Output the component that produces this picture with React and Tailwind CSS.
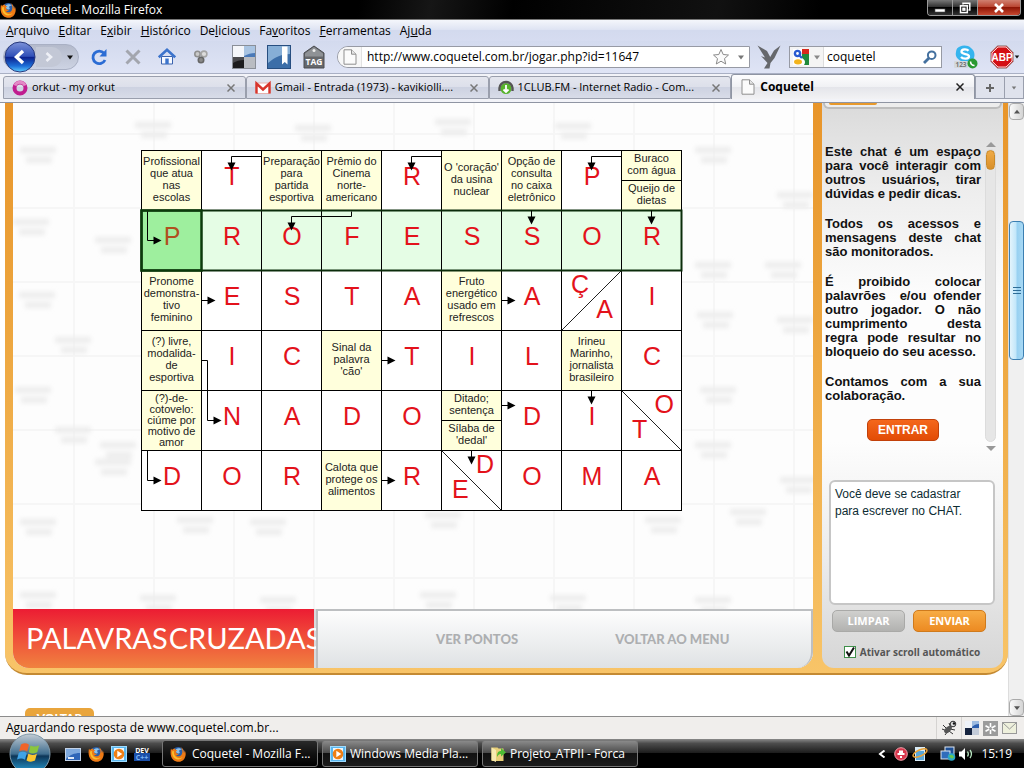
import React from "react";

const UI = "font-['Open_Sans','Noto_Sans',sans-serif]";
const ARIAL = "font-['Liberation_Sans',Arial,sans-serif]";

/* ---------- icons ---------- */

function FirefoxIcon({ className = "size-4" }) {
  return (
    <svg viewBox="0 0 16 16" className={className} aria-hidden="true">
      <circle cx="8.2" cy="7.6" r="6.6" fill="#2b5fa8" />
      <path d="M6 3.2c2-1.6 5-1 6 .8-1.500-.4-2.500.2-3 1.200 1 .6 1 1.600 0 2.200-1.600.2-3-.8-3-2z" fill="#8cc3ec" />
      <path d="M1 2.600C.2 6.500.300 11 3.200 13.700c3.400 3 8.600 2.600 11-.8 1.900-2.700 2-6.400.3-9 .2 1.500 0 2.300-.5 3C13.800 4 12.500 2 10.700 1c1.800 2.200 2.300 5.500.8 7.700-1.500 2.200-4.600 2-5.600.4 1.300.3 2.300-.2 2.900-1.100-1.500-.2-2.800-1-2.900-2.100.1-.9.700-1.400 1.400-1.500C5.800 4 4.800 3.400 4.500 2.600 3.500 2.800 2.600 3.300 2 4c-.5-.4-.8-.9-1-1.400z" fill="#ee7a15" />
      <path d="M2 5.500c0 3 .8 5.500 3 7 2.500 1.600 5.800 1 7.600-1.200-2.400 1.400-5.700 1-7.300-1C4 8.800 3.600 7 4 5z" fill="#fbc02c" />
    </svg>
  );
}

function PageIcon({ className = "w-3.5 h-4" }) {
  return (
    <svg viewBox="0 0 14 16" className={className} aria-hidden="true">
      <path d="M1 .8h7.500L13 5.200v10H1z" fill="#fbfbfb" stroke="#8f8f8f" />
      <path d="M8.500.8v4.400H13" fill="#e6e6e6" stroke="#8f8f8f" />
    </svg>
  );
}

function MediaIcon() {
  return (
    <svg viewBox="0 0 16 16" className="size-4 shrink-0" aria-hidden="true">
      <rect x=".5" y=".5" width="15" height="15" fill="#5bb7ee" stroke="#9fdcff" />
      <rect x="3" y="2" width="10" height="12" fill="#eef6fb" />
      <circle cx="8" cy="8" r="5.300" fill="#ef7f15" />
      <path d="M6.300 4.800 11.300 8l-5 3.200z" fill="#fff" />
    </svg>
  );
}

function DeliciousIcon({ className }) {
  return (
    <svg viewBox="0 0 24 24" className={className} aria-hidden="true">
      <rect width="24" height="24" fill="#8a8f98" />
      <rect x="1" y="1" width="11" height="11" fill="#f4f6fa" />
      <rect x="12" y="1" width="11" height="11" fill="#4a79b8" />
      <path d="M12 1h11v7c-4 0-7 1-11 3z" fill="#a9c4e2" />
      <rect x="1" y="12" width="11" height="11" fill="#1c1c1e" />
      <rect x="12" y="12" width="11" height="11" fill="#b9bcc2" />
      <path d="M1 12h11v3c-4 0-8 1-11 3z" fill="#4a4a4e" />
    </svg>
  );
}

/* ---------- browser chrome ---------- */

function TitleBar() {
  return (
    <header className="flex h-5 shrink-0 items-center bg-black bg-[linear-gradient(100deg,#000_35%,#161616_42%,#000_50%,#111_70%,#000_80%)] border-b border-[#777]">
      <FirefoxIcon className="size-4 shrink-0" />
      <h1 className="flex-1 pl-[5px] text-[12px] leading-4 text-white">Coquetel - Mozilla Firefox</h1>
      <div className="mr-[3px] flex h-4 self-start overflow-hidden rounded-b-[4px] border border-t-0 border-[#9a9a9a]">
        <button aria-label="Minimizar" className="flex w-[25px] items-center justify-center border-r border-[#9a9a9a] bg-[linear-gradient(#777,#2a2a2a_50%,#000_50%,#333)]">
          <svg viewBox="0 0 12 12" className="size-3"><rect x="1" y="7" width="10" height="3" fill="#fff" stroke="#555" strokeWidth=".6" /></svg>
        </button>
        <button aria-label="Restaurar" className="flex w-[25px] items-center justify-center border-r border-[#9a9a9a] bg-[linear-gradient(#777,#2a2a2a_50%,#000_50%,#333)]">
          <svg viewBox="0 0 12 12" className="size-3" fill="none" stroke="#fff" strokeWidth="1.500"><path d="M4 2.500V1.200h6.800V8H9.500" /><rect x="1.500" y="3.800" width="6.800" height="6.800" /><rect x="4" y="6.300" width="1.800" height="1.800" /></svg>
        </button>
        <button aria-label="Fechar" className="flex w-[42px] items-center justify-center bg-[linear-gradient(#d08070,#b8402c_50%,#8e1606_50%,#c84830)]">
          <svg viewBox="0 0 12 12" className="size-3" stroke="#fff" strokeWidth="2.600"><path d="M2 2l8 8M10 2l-8 8" /></svg>
        </button>
      </div>
    </header>
  );
}

const MENUS = [
  ["", "A", "rquivo"],
  ["", "E", "ditar"],
  ["E", "x", "ibir"],
  ["", "H", "istórico"],
  ["De", "l", "icious"],
  ["Fa", "v", "oritos"],
  ["", "F", "erramentas"],
  ["Aj", "u", "da"],
];

function MenuBar() {
  return (
    <nav className="flex h-[21px] shrink-0 items-center gap-[9px] bg-[linear-gradient(#f4f6fb,#dfe4f3_45%,#d3daee_50%,#d6dcf0)] pl-1.5 text-[12px] text-black">
      {MENUS.map(([a, u, b]) => (
        <button key={a + u + b}>{a}<u>{u}</u>{b}</button>
      ))}
    </nav>
  );
}

function BackForward() {
  return (
    <div className="flex h-[26px] w-[76px] items-center rounded-full border border-[#a9b0c4] bg-[linear-gradient(#b4bacb,#cdd3e3)]">
      <button aria-label="Voltar" className="-my-1 shrink-0">
        <svg viewBox="0 0 32 32" className="size-8">
          <defs>
            <linearGradient id="back" x2="0" y2="1">
              <stop offset="0" stopColor="#7d92d8" /><stop offset=".48" stopColor="#2f4fb8" />
              <stop offset=".5" stopColor="#0c1f8c" /><stop offset=".8" stopColor="#1d6fd8" /><stop offset="1" stopColor="#62d0ff" />
            </linearGradient>
          </defs>
          <circle cx="16" cy="16" r="15" fill="url(#back)" stroke="#27387c" />
          <path d="M19 10l-6.500 6 6.500 6" fill="none" stroke="#fff" strokeWidth="3.400" />
        </svg>
      </button>
      <button aria-label="Avançar" className="flex h-5 w-[26px] items-center justify-center rounded-r-full bg-[#c3c8d6]">
        <svg viewBox="0 0 12 12" className="size-3" fill="none" stroke="#eef0f6" strokeWidth="2.600"><path d="M3.500 2l4.500 4-4.500 4" /></svg>
      </button>
      <svg viewBox="0 0 8 5" className="ml-1 h-[5px] w-2"><path d="M1 .5h6L4 4.500z" fill="#111" /></svg>
    </div>
  );
}

function Toolbar() {
  return (
    <div className="flex h-[33px] shrink-0 items-center border-b border-[#a9b0c4] bg-[linear-gradient(#d3daee,#dfe4f5)] pl-[3px] text-[12px]">
      <BackForward />
      <button aria-label="Recarregar" className="ml-[11px]">
        <svg viewBox="0 0 18 18" className="size-[18px]"><path d="M14 5.200A6.300 6.300 0 1 0 15 12" fill="none" stroke="#2b6cd4" strokeWidth="2.800" /><path d="M16.500 1v7.500H9.500z" fill="#2b6cd4" /></svg>
      </button>
      <button aria-label="Parar" className="ml-[17px]">
        <svg viewBox="0 0 16 16" className="size-4" stroke="#a3a6ae" strokeWidth="3"><path d="M1.500 1.500l13 13M14.500 1.500l-13 13" /></svg>
      </button>
      <button aria-label="Página inicial" className="ml-[17px]">
        <svg viewBox="0 0 18 18" className="size-[18px]"><path d="M3.500 8.500h11V16h-11z" fill="#f6f9ff" stroke="#3b63ae" /><path d="M.8 9.300 9 1.800l8.200 7.500" fill="none" stroke="#3b73cc" strokeWidth="2.600" /><path d="M7.300 10.500h3.400V16H7.300z" fill="#3b73cc" /></svg>
      </button>
      <button aria-label="Extensões" className="ml-[17px]">
        <svg viewBox="0 0 16 16" className="size-4"><circle cx="4.500" cy="5" r="2.700" fill="#c9c9c9" stroke="#8f8f8f" strokeWidth="1.600" /><circle cx="11" cy="5" r="2.900" fill="#dcdcdc" stroke="#a5a5a5" strokeWidth="1.600" /><circle cx="8" cy="11" r="2.700" fill="#8a8a8a" stroke="#666" strokeWidth="1.600" /></svg>
      </button>
      <button aria-label="Delicious" className="ml-[23px]"><DeliciousIcon className="size-6" /></button>
      <button aria-label="Favoritos" className="ml-[11px]">
        <svg viewBox="0 0 24 24" className="size-6"><rect x=".5" y=".5" width="23" height="23" fill="#3c6ea8" stroke="#274e80" /><path d="M1 1h22v8C15 9 8 12 1 18z" fill="#86aed6" /><path d="M15 1.500h5.500v18l-2.700-2.500-2.800 2.500z" fill="#fff" /></svg>
      </button>
      <button aria-label="Etiquetar" className="ml-3">
        <svg viewBox="0 0 22 24" className="h-6 w-[22px]"><path d="M11 1 21 8v15H1V8z" fill="#66686c" stroke="#4a4c50" /><path d="M11 2l9 6.500v3H2v-3z" fill="#8f9296" /><circle cx="11" cy="5.500" r="1.500" fill="#eee" /><text x="11" y="20" textAnchor="middle" fontSize="8.500" fontWeight="700" fill="#fff" fontFamily="Open Sans">TAG</text></svg>
      </button>
      <div className="ml-3 flex h-[22px] min-w-0 flex-1 items-center rounded-l-full border border-[#979aa4] bg-white">
        <span className="flex h-full w-6 items-center justify-center rounded-l-full border-r border-[#e2e2e2] bg-[#f7f7f7]"><PageIcon /></span>
        <input aria-label="Endereço" defaultValue="http://www.coquetel.com.br/jogar.php?id=11647" className="min-w-0 flex-1 bg-transparent pl-[5px] outline-none" />
        <svg viewBox="0 0 18 18" className="size-[18px] shrink-0"><path d="M9 1.500l2.200 5 5.300.5-4 3.600 1.200 5.400L9 13.200 4.300 16l1.200-5.400L1.500 7l5.300-.5z" fill="#fbfbfb" stroke="#8a8a8a" /></svg>
        <svg viewBox="0 0 8 5" className="ml-[7px] mr-1 h-[5px] w-2 shrink-0"><path d="M1 .5h6L4 4.500z" fill="#777" /></svg>
      </div>
      <button aria-label="Leitor" className="ml-[7px]">
        <svg viewBox="0 0 24 24" className="size-6" fill="#66686c"><path d="M.5.5 10 6l3.200 6L17 5.500 23.500.5 17.500 13 13.500 18 12.500 23.500H7L10.500 18 4 11l4 1.500z" /></svg>
      </button>
      <div className="ml-2 flex h-[22px] w-[153px] items-center border border-[#979aa4] bg-white">
        <button aria-label="Mecanismo de busca" className="flex h-full w-[34px] items-center gap-1 border-r border-[#ddd] bg-[#f4f4f4] pl-[3px]">
          <svg viewBox="0 0 16 16" className="size-4"><rect width="16" height="16" fill="#fff" /><rect x="9" width="7" height="6" fill="#d8281c" /><path d="M9 5h7v11h-5c2-3 1-5-2-7z" fill="#1f8a3c" /><circle cx="4.500" cy="4.500" r="2.600" fill="none" stroke="#2a5bd0" strokeWidth="2.400" /><path d="M6.500 6.500 9 9" stroke="#2a5bd0" strokeWidth="2.400" /><ellipse cx="5" cy="12.800" rx="4" ry="2.600" fill="#f3b41c" /></svg>
          <svg viewBox="0 0 8 5" className="h-[5px] w-2"><path d="M1 .5h6L4 4.500z" fill="#888" /></svg>
        </button>
        <input aria-label="Busca" defaultValue="coquetel" className="min-w-0 flex-1 bg-transparent pl-[3px] outline-none" />
        <button aria-label="Buscar" className="mr-1">
          <svg viewBox="0 0 14 14" className="size-3.5" fill="none" stroke="#44719f" ><circle cx="8.700" cy="5.200" r="3.800" strokeWidth="2" /><path d="M6 8 1 13" strokeWidth="2.800" /></svg>
        </button>
      </div>
      <button aria-label="Skype" className="ml-3">
        <svg viewBox="0 0 24 24" className="size-6"><path d="M6 1.500C9 0 14 0 17 3c4 3 4.500 8 2 12-3 3-9 3-12 1C3 14 1 11 2 7c0-3 2-5 4-5.500z" fill="#35b4ee" /><path d="M14.500 5.800c-1.500-2-7-2-7 1 0 3 7.500 1.500 7.500 4.500s-6 3-8 .7" fill="none" stroke="#fff" strokeWidth="2.300" /><rect x="0" y="16" width="14" height="7" rx="1" fill="#d4d8dc" /><text x="7" y="22" textAnchor="middle" fontSize="6.500" fontWeight="700" fill="#777" fontFamily="Open Sans">123</text><circle cx="18.500" cy="18.500" r="5" fill="#2a9a32" /><path d="M16.500 16.500c.2 2.500 1.700 4 4 4" fill="none" stroke="#fff" strokeWidth="1.600" /></svg>
      </button>
      <button aria-label="Adblock Plus" className="ml-3 mr-1 flex items-center">
        <svg viewBox="0 0 24 24" className="size-6"><path d="M7.500.8h9L23.200 7.500v9l-6.700 6.700h-9L.8 16.500v-9z" fill="#d40f14" stroke="#9a9a9a" /><path d="M8 2h8l6 6v8l-6 6H8l-6-6V8z" fill="none" stroke="#fff" strokeWidth=".8" /><text x="12" y="16" textAnchor="middle" fontSize="10" fontWeight="700" fill="#fff" fontFamily="Liberation Sans Narrow, Liberation Sans">ABP</text></svg>
        <svg viewBox="0 0 8 5" className="h-1 w-1.5"><path d="M1 .5h6L4 4.500z" fill="#111" /></svg>
      </button>
    </div>
  );
}

function CloseX({ active }) {
  return (
    <svg viewBox="0 0 8 8" className={active ? "size-2 stroke-[#222]" : "size-2 stroke-[#777]"} strokeWidth="1.500"><path d="M.5.5l7 7M7.500.5l-7 7" /></svg>
  );
}

const TABS = [
  {
    title: "orkut - my orkut",
    icon: <svg viewBox="0 0 16 16" className="size-4 shrink-0"><circle cx="8" cy="8" r="5.500" fill="none" stroke="#c01d8f" strokeWidth="4" /><path d="M3 5.500a5.500 5.500 0 0 1 10 0" fill="none" stroke="#e389c6" strokeWidth="3" /></svg>,
  },
  {
    title: "Gmail - Entrada (1973) - kavikiolli....",
    icon: <svg viewBox="0 0 16 16" className="size-4 shrink-0"><path d="M1 3h14v10.500H1z" fill="#fff" stroke="#e5b0ac" /><path d="M1.500 13.500V3.500L8 9.500l6.500-6v10" fill="none" stroke="#d8352c" strokeWidth="2.400" /></svg>,
  },
  {
    title: "1CLUB.FM - Internet Radio - Com...",
    icon: <svg viewBox="0 0 16 16" className="size-4 shrink-0"><circle cx="8" cy="8.500" r="5.500" fill="#57b32c" /><path d="M1.500 11V8a6.500 6 0 0 1 13 0v3" fill="none" stroke="#555" strokeWidth="2.400" /><path d="M8 5v7M5.500 9.500 8 12l2.500-2.500" fill="none" stroke="#fff" strokeWidth="1.800" /></svg>,
  },
  { title: "Coquetel", active: true, icon: <PageIcon className="h-4 w-3.5 shrink-0" /> },
];

function TabBar() {
  return (
    <div className="shrink-0 border-b border-[#8f95a3] bg-[#f2f3f8] pb-[3px] pl-[3px]">
      <div className="flex h-[25px] items-end" role="tablist">
        {TABS.map((t) => (
          <div
            key={t.title}
            className={
              t.active
                ? "flex h-[25px] min-w-0 flex-1 items-center gap-[5px] rounded-t-[3px] border border-b-0 border-[#8f95a3] bg-[linear-gradient(#fdfdfe,#f0f1f4_50%,#e4e5ea_50%,#f2f2f4)] pl-[9px] pr-2.5 text-[12px] font-bold"
                : "flex h-[23px] min-w-0 flex-1 items-center gap-1 rounded-t-[3px] border border-[#9a9fad] bg-[linear-gradient(#e4e6ee,#dcdfea_50%,#cdd2e1_50%,#d8dce8)] pl-2 pr-2.5 text-[11px]"
            }
          >
            {t.icon}
            <button role="tab" aria-selected={!!t.active} className="min-w-0 flex-1 whitespace-nowrap text-left">{t.title}</button>
            <button aria-label="Fechar aba"><CloseX active={t.active} /></button>
          </div>
        ))}
        <button aria-label="Nova aba" className="flex h-[23px] w-[30px] items-center justify-center border border-[#9a9fad] bg-[#dfe2ec]">
          <svg viewBox="0 0 8 8" className="size-2" stroke="#666" strokeWidth="2"><path d="M4 0v8M0 4h8" /></svg>
        </button>
        <button aria-label="Listar abas" className="flex h-[23px] w-[19px] items-center justify-center border border-l-0 border-[#9a9fad] bg-[#dfe2ec]">
          <svg viewBox="0 0 8 5" className="h-1 w-1.5"><path d="M1 .5h6L4 4.500z" fill="#777" /></svg>
        </button>
      </div>
    </div>
  );
}

/* ---------- crossword ---------- */

const q = (...lines) => ({ clues: [lines] });
const ROWS = [
  [q("Profissional", "que atua", "nas", "escolas"), "T", q("Preparação", "para", "partida", "esportiva"), q("Prêmio do", "Cinema", "norte-", "americano"), "R", q("O 'coração'", "da usina", "nuclear"), q("Opção de", "consulta", "no caixa", "eletrônico"), "P", { clues: [["Buraco", "com água"], ["Queijo de", "dietas"]] }],
  ["P", "R", "O", "F", "E", "S", "S", "O", "R"],
  [q("Pronome", "demonstra-", "tivo", "feminino"), "E", "S", "T", "A", q("Fruto", "energético", "usado em", "refrescos"), "A", { rise: ["Ç", "A"] }, "I"],
  [q("(?) livre,", "modalida-", "de", "esportiva"), "I", "C", q("Sinal da", "palavra", "'cão'"), "T", "I", "L", q("Irineu", "Marinho,", "jornalista", "brasileiro"), "C"],
  [q("(?)-de-", "cotovelo:", "ciúme por", "motivo de", "amor"), "N", "A", "D", "O", { clues: [["Ditado;", "sentença"], ["Sílaba de", "'dedal'"]] }, "D", "I", { fall: ["O", "T"] }],
  ["D", "O", "R", q("Calota que", "protege os", "alimentos"), "R", { fall: ["D", "E"] }, "O", "M", "A"],
];

const LINES = [
  "M120 6H90V13", "M300 6H270V13", "M480 6H450V13",
  "M210 61V66H150V73", "M390 60V67", "M510 60V67", "M6 61V90H13",
  "M60 150H67", "M360 150H367",
  "M60 210H66V270H73", "M240 210H247",
  "M360 255H367", "M450 240V247",
  "M6 300V330H13", "M240 330H247", "M330 300V307",
];
const DOWN_TIPS = [[90, 20], [270, 20], [450, 20], [150, 80], [390, 74], [510, 74], [450, 254], [330, 314]];
const RIGHT_TIPS = [[20, 90], [74, 150], [374, 150], [80, 270], [254, 210], [374, 255], [20, 330], [254, 330]];

function Clue({ lines }) {
  return (
    <div className={lines.length > 4 ? "text-[11px] leading-[11px]" : "pb-[3px] text-[11px] leading-3"}>
      {lines.map((l) => <div key={l}>{l}</div>)}
    </div>
  );
}

function Cell({ value, selected }) {
  const base = "size-[60px] border-b border-r border-black";
  if (typeof value === "string") {
    return (
      <div className={`${base} flex items-center justify-center pb-[9px] pl-px text-[25px] leading-7 ${selected ? "bg-[#9eef9e] text-[#b0501f]" : "text-[#e3121b]"}`}>
        {value}
      </div>
    );
  }
  if (value.clues) {
    return (
      <div className={`${base} flex flex-col divide-y divide-black whitespace-nowrap bg-[#ffffdc] text-center text-[#222]`}>
        {value.clues.map((c) => (
          <div key={c[0]} className="flex min-h-0 flex-1 items-center justify-center"><Clue lines={c} /></div>
        ))}
      </div>
    );
  }
  const [top, bottom] = value.rise || value.fall;
  return (
    <div className={`${base} flex flex-col text-[25px] leading-[25px] text-[#e3121b]`}>
      <div className={value.rise ? "flex w-full pl-[9px] pt-px" : "flex w-full justify-end pr-[7px] pt-px"}>{top}</div>
      <div className={value.rise ? "flex w-full justify-end pr-2" : "flex w-full pl-2.5"}>{bottom}</div>
    </div>
  );
}

function Crossword() {
  return (
    <div className={`relative w-[541px] shrink-0 border-l border-t border-black bg-white ${ARIAL}`}>
      {ROWS.map((row, r) => (
        <div key={r} className={r === 1 ? "flex bg-[#e5fde5]" : "flex"}>
          {row.map((v, c) => <Cell key={c} value={v} selected={r === 1 && c === 0} />)}
        </div>
      ))}
      <svg viewBox="0 0 541 361" className="pointer-events-none absolute -left-px -top-px h-[361px] w-[541px] overflow-visible" aria-hidden="true">
        <path d="M421 180 480 121M481 241l59 59M301 301l59 59" fill="none" stroke="#222" />
        <g transform="translate(.5 .5)" fill="none" stroke="#000">
          <rect x="0" y="60" width="540" height="60" stroke="#0b2c0b" strokeWidth="2" />
          <rect x="0" y="60" width="60" height="60" stroke="#0b3a0b" strokeWidth="2.500" />
          {LINES.map((d) => <path key={d} d={d} />)}
          {DOWN_TIPS.map(([x, y]) => <path key={`d${x}-${y}`} d={`M${x - 4} ${y - 8}h8l-4 8z`} fill="#000" stroke="none" />)}
          {RIGHT_TIPS.map(([x, y]) => <path key={`r${x}-${y}`} d={`M${x - 8} ${y - 4}v8l8-4z`} fill="#000" stroke="none" />)}
        </g>
      </svg>
    </div>
  );
}

const GHOSTS = [
  [25, 50], [18, 122], [100, 140], [24, 195], [100, 362], [20, 290], [105, 345], [182, 420], [255, 422], [25, 422],
  [25, 495], [145, 498], [265, 500], [425, 495], [430, 415], [555, 498], [650, 420], [700, 500], [735, 412],
  [782, 95], [700, 165], [770, 165], [702, 215], [782, 220], [705, 290], [700, 345], [785, 380], [140, 25], [300, 28], [440, 22], [560, 26], [700, 50], [60, 240], [60, 330],
];

function GhostBackground() {
  return (
    <svg className="absolute inset-0 h-full w-full" aria-hidden="true">
      <defs>
        <pattern id="ghost-grid" width="80" height="74" patternUnits="userSpaceOnUse" x="60" y="30">
          <path d="M0 0H80M0 0V74" fill="none" stroke="#f6f6f6" strokeWidth="4" />
        </pattern>
        <filter id="soft" x="-10%" y="-10%" width="120%" height="120%"><feGaussianBlur stdDeviation="2.500" /></filter>
      </defs>
      <rect width="100%" height="100%" fill="#fdfdfd" />
      <rect width="100%" height="100%" fill="url(#ghost-grid)" />
      <g fill="#ececec" filter="url(#soft)">
        {GHOSTS.map(([x, y]) => (
          <g key={`${x}-${y}`}>
            <rect x={x - 18} y={y - 6} width="36" height="6" />
            <rect x={x - 12} y={y + 4} width="26" height="6" />
          </g>
        ))}
      </g>
    </svg>
  );
}

function Game() {
  return (
    <main className="flex min-w-0 flex-1 flex-col overflow-hidden rounded-b-2xl bg-white">
      <div className="relative flex flex-1 items-start pb-[98px] pl-32 pt-[47px]">
        <GhostBackground />
        <Crossword />
      </div>
      <div className="flex h-[59px] shrink-0 bg-[#d9dadc]">
        <h2 className="flex w-[301px] shrink-0 items-center gap-px bg-[linear-gradient(#ec1c33,#f0503a_50%,#f0823f)] pb-0.5 pl-[13px] font-['Lato','Open_Sans',sans-serif] text-[29px] font-normal text-white">
          <span>PALAVRAS</span><span>CRUZADAS</span>
        </h2>
        <div className="ml-0.5 flex flex-1 items-center gap-[97px] rounded-br-2xl border-2 border-b-0 border-[#bdbfc1] bg-[linear-gradient(#fdfdfd,#dfe2e4)] pl-[118px] font-['Lato','Open_Sans',sans-serif] text-[13px] font-black text-[#adafb1]">
          <button className="whitespace-nowrap">VER PONTOS</button>
          <button className="whitespace-nowrap">VOLTAR AO MENU</button>
        </div>
      </div>
    </main>
  );
}

/* ---------- chat ---------- */

const CHAT = [
  "Este chat é um espaço para você interagir com outros usuários, tirar dúvidas e pedir dicas.",
  "Todos os acessos e mensagens deste chat são monitorados.",
  "É proibido colocar palavrões \u00a0e/ou ofender outro jogador. O não cumprimento desta regra pode resultar no bloqueio do seu acesso.",
  "Contamos com a sua colaboração.",
];

function Chat() {
  return (
    <aside className={`flex w-[181px] shrink-0 flex-col overflow-hidden rounded-b-xl bg-[linear-gradient(#dadada,#ededed_15%,#fdfdfd_35%,#fdfdfd_60%,#ececec_80%,#d6d6d6)] ${ARIAL}`}>
      <div className="mx-px h-1.5 rounded-b-lg border-2 border-t-0 border-[#bdbdbd] bg-[#ededed]">
        <div className="ml-1 h-0.5 w-12 rounded-b-lg bg-[#e8992b]" />
      </div>
      <div className="mt-[31px] flex gap-1 pl-[3px] pr-[7px]">
        <div className="flex min-w-0 flex-1 flex-col gap-4 pb-[10px] pt-[5px] text-justify text-[13px] font-bold leading-[14px] text-[#111]">
          {CHAT.map((p) => <p key={p}>{p}</p>)}
          <button className="h-[22px] w-[72px] self-center rounded-[5px] border border-[#c2410a] bg-[linear-gradient(#f4671c,#e24c06)] text-[12px] leading-4 text-white">ENTRAR</button>
        </div>
        <div className="flex w-[11px] flex-col items-center">
          <svg viewBox="0 0 10 5" className="mt-0.5 h-[5px] w-2.5"><path d="M0 5h10L5 0z" fill="#999" /></svg>
          <div className="mb-1 mt-0.5 w-[11px] flex-1 rounded-full border border-[#dcdcdc] bg-[#e6e6e6]">
            <div className="h-5 rounded-full border border-[#c98a2a] bg-[linear-gradient(#f0ab45,#d8902b)]" />
          </div>
          <svg viewBox="0 0 10 5" className="h-[5px] w-2.5"><path d="M0 0h10L5 5z" fill="#999" /></svg>
        </div>
      </div>
      <div className="mt-auto flex flex-col pb-2 pl-[7px] pr-2">
        <textarea aria-label="Mensagem" readOnly defaultValue={"Você deve se cadastrar\npara escrever no CHAT."} className="h-[125px] w-full resize-none rounded-md border-2 border-[#c6c6c6] bg-white px-1 pt-1 text-[12px] leading-[17px] text-[#0d2c33] outline-none" />
        <div className={`mt-[5px] flex gap-2 pl-[3px] text-[11px] font-bold leading-4 text-white ${UI}`}>
          <button className="h-[22px] w-[73px] rounded-[5px] border border-[#a9a9a7] bg-[linear-gradient(#d0d0ce,#b2b2b0)]">LIMPAR</button>
          <button className="h-[22px] w-[73px] rounded-[5px] border border-[#cf7a1c] bg-[linear-gradient(#f7ac45,#ec8a22)]">ENVIAR</button>
        </div>
        <label className={`mt-3 flex items-center gap-1 self-center text-[10px] font-bold leading-4 text-[#555] ${UI}`}>
          <span className="relative flex">
            <input type="checkbox" defaultChecked className="peer size-3 appearance-none border border-[#3f8f4a] bg-white" />
            <svg viewBox="0 0 12 12" className="pointer-events-none absolute inset-0 hidden size-3 peer-checked:block"><path d="M2.500 5.500 5 9.500l5-8" fill="none" stroke="#111" strokeWidth="2" /></svg>
          </span>
          Ativar scroll automático
        </label>
      </div>
    </aside>
  );
}

function Scrollbar() {
  return (
    <div className="flex w-4 shrink-0 flex-col border-l border-[#ddd] bg-[#f0f0f0]" aria-hidden="true">
      <div className="flex h-[17px] items-center justify-center rounded-sm border border-[#aaa] bg-[linear-gradient(90deg,#fafafa,#d4d4d4)]">
        <svg viewBox="0 0 8 5" className="h-[5px] w-1.5"><path d="M0 5h8L4 0z" fill="#555" /></svg>
      </div>
      <div className="flex-[101]" />
      <div className="flex flex-[138] items-center justify-center rounded-sm border border-[#3c7fb1] bg-[linear-gradient(90deg,#e3f4fc,#c3e7fa_45%,#98d1f1_55%,#a8d9f5)]">
        <svg viewBox="0 0 8 8" className="size-2" stroke="#2f6d97"><path d="M0 1.500h8M0 4.500h8M0 7.500h8" /></svg>
      </div>
      <div className="flex-[340]" />
      <div className="flex h-[17px] items-center justify-center rounded-sm border border-[#aaa] bg-[linear-gradient(90deg,#fafafa,#d4d4d4)]">
        <svg viewBox="0 0 8 5" className="h-1 w-1.5"><path d="M0 0h8L4 5z" fill="#555" /></svg>
      </div>
    </div>
  );
}

/* ---------- status and task bars ---------- */

function StatusBar() {
  return (
    <div className="flex h-[23px] shrink-0 items-center border-t border-[#8c8c8c] bg-[#f0eeec] pl-1.5 pr-[7px] text-[12px] text-black">
      <p className="flex-1">Aguardando resposta de www.coquetel.com.br...</p>
      <span className="flex h-full items-center border-l border-[#d5d3d1] px-1">
        <svg viewBox="0 0 16 16" className="size-4"><g stroke="#333" strokeWidth="1"><path d="M2 5l5 5M1 9l5 2M4 15l3-4M8 3l2 5M14 10l-5-1M12 14l-4-3" /></g><ellipse cx="7" cy="9.500" rx="4.500" ry="2.600" transform="rotate(-42 7 9.500)" fill="#555" /><circle cx="12" cy="4" r="2.800" fill="#ddd" stroke="#333" /><circle cx="13" cy="3.500" r="1.200" fill="#111" /></svg>
      </span>
      <span className="flex h-full items-center gap-1 border-l border-[#d5d3d1] pl-[3px]">
        <svg viewBox="0 0 14 14" className="size-3.5"><rect width="14" height="14" fill="#c3cbd8" /><path d="M0 0h7v7H0z" fill="#eef2f8" /><path d="M7 0h7v7H7z" fill="#2d5fae" /><path d="M7 0h7v3c-3 0-5 1-7 3z" fill="#9dbbe0" /><path d="M0 7h7v7H0z" fill="#15233e" /></svg>
        <svg viewBox="0 0 15 15" className="size-[15px]"><rect width="15" height="15" fill="#9b9b9b" /><g stroke="#fff" strokeWidth="1.600"><path d="M7.500 2v11M2.500 4.700l10 5.600M12.500 4.700l-10 5.600" /></g><circle cx="7.500" cy="7.500" r="1.500" fill="#9b9b9b" /></svg>
        <svg viewBox="0 0 15 12" className="h-3 w-[15px]"><rect x=".5" y=".5" width="14" height="11" fill="#eef0dc" stroke="#999" /><path d="M1 1l6.500 6L14 1" fill="none" stroke="#999" /></svg>
      </span>
    </div>
  );
}

function StartOrb() {
  return (
    <button aria-label="Iniciar" className="z-10 -my-2 ml-[9px] shrink-0">
      <svg viewBox="0 0 42 42" className="size-[42px]">
        <defs>
          <linearGradient id="orb" x2="0" y2="1"><stop offset="0" stopColor="#c3ccd4" /><stop offset=".5" stopColor="#3f6d8e" /><stop offset=".55" stopColor="#0d3557" /><stop offset="1" stopColor="#2aa6dd" /></linearGradient>
        </defs>
        <circle cx="21" cy="21" r="20" fill="url(#orb)" stroke="#7f99aa" />
        <path d="M12 11.500c3-1.700 5.500-1.500 8 .2l-1.800 6.800c-2.500-1.600-5-1.600-8-.2z" fill="#f0642b" />
        <path d="M21.500 12.500c3 1.500 5.500 1.300 8.700-.2l-1.900 7c-3 1.500-5.600 1.500-8.600-.1z" fill="#8ac53e" />
        <path d="M9.800 19.800c3-1.400 5.500-1.300 8 .2L16 26.700c-2.500-1.600-5-1.600-8-.2z" fill="#3fa3e6" />
        <path d="M19.300 20.800c3 1.500 5.600 1.400 8.600-.1l-1.900 6.900c-3 1.400-5.600 1.400-8.500-.2z" fill="#fcc630" />
      </svg>
    </button>
  );
}

const TASKS = [
  { label: "Coquetel - Mozilla F...", icon: <FirefoxIcon className="size-4 shrink-0" />, active: true },
  { label: "Windows Media Pla...", icon: <MediaIcon /> },
  {
    label: "Projeto_ATPII - Forca",
    icon: <svg viewBox="0 0 16 16" className="size-4 shrink-0"><path d="M1.500 1.500h6l1 1h5V15h-12z" fill="#e8cf78" /><path d="M1.500 1.500 6 4v12l-4.500-2z" fill="#f8eab0" /><path d="M7 11c0-4 1-6 4-6V2l5 4.500-5 4V8c-2 0-3 1-4 3z" fill="#4dbb34" /></svg>,
  },
];

function TaskBar() {
  return (
    <footer className="flex h-[29px] shrink-0 items-center bg-[linear-gradient(#8a8a8a,#4d4d4d_15%,#1c1c1c_48%,#000_50%,#000)] text-[12px] text-white">
      <StartOrb />
      <div className="ml-3.5 flex shrink-0 gap-[7px]">
        <button aria-label="Mostrar área de trabalho"><svg viewBox="0 0 16 16" className="size-4"><rect x=".5" y="2.500" width="15" height="12" fill="#2f66b8" stroke="#c3d3e8" /><path d="M1 3h14v4C9 7 5 9 1 13z" fill="#7ea9de" /><rect x="3" y="11" width="6" height="2" fill="#dfe9f6" /></svg></button>
        <button aria-label="Firefox"><FirefoxIcon className="size-4" /></button>
        <button aria-label="Windows Media Player"><MediaIcon /></button>
        <button aria-label="Dev-C++"><svg viewBox="0 0 16 16" className="size-4"><rect y="7" width="16" height="8" fill="#1b4fa8" /><text x="8" y="7" textAnchor="middle" fontSize="7" fontWeight="700" fill="#fff" fontFamily="Open Sans">DEV</text><text x="8" y="14" textAnchor="middle" fontSize="7" fontWeight="700" fill="#7db5f5" fontFamily="Open Sans">C++</text></svg></button>
      </div>
      <div className="ml-3 flex min-w-0 flex-1 gap-1">
        {TASKS.map((t) => (
          <button
            key={t.label}
            className={
              t.active
                ? "flex h-[27px] w-[156px] items-center gap-1.5 rounded-[3px] border border-[#777] bg-[linear-gradient(#2a2a2a,#111_50%,#000)] pl-[7px]"
                : "flex h-[27px] w-[156px] items-center gap-1 rounded-[3px] border border-[#777] bg-[linear-gradient(#8a8a8a,#4a4a4a_48%,#111_50%,#1c1c1c)] pl-[7px]"
            }
          >
            {t.icon}
            <span className="truncate">{t.label}</span>
          </button>
        ))}
      </div>
      <div className="flex shrink-0 items-center pr-3">
        <button aria-label="Mostrar ícones ocultos"><svg viewBox="0 0 8 8" className="size-2" fill="none" stroke="#fff" strokeWidth="2"><path d="M6.500.5 2 4l4.500 3.500" /></svg></button>
        <svg viewBox="0 0 14 14" className="ml-2 size-3.5"><circle cx="7" cy="7" r="6.300" fill="#d8364c" stroke="#f3a3ad" /><path d="M3.500 7h7M7 9v2" stroke="#fff" strokeWidth="2" /><path d="M5 3.500h4v3H5z" fill="#fff" /></svg>
        <svg viewBox="0 0 16 16" className="ml-1 size-4"><rect x="3" y="1" width="10" height="14" fill="#d9ecf8" /><rect x="4" y="5" width="8" height="9" fill="#58a8dc" /><ellipse cx="8" cy="7" rx="7.500" ry="3" transform="rotate(-25 8 7)" fill="none" stroke="#e8a33a" strokeWidth="1.500" /></svg>
        <svg viewBox="0 0 16 16" className="ml-3 size-4"><rect x="5" y="1" width="9" height="8" fill="#1d4f96" stroke="#dfe8f2" /><rect x="1" y="5" width="9" height="8" fill="#2f6cbc" stroke="#dfe8f2" /><circle cx="11.500" cy="11" r="3.800" fill="#2aa7c8" /><path d="M9 10c2-2 4-1 5 1-1 2-3 2-5-1z" fill="#6cc94a" /></svg>
        <svg viewBox="0 0 16 16" className="ml-0.5 size-4"><path d="M1 5.500h2.500L7 2v12l-3.500-3.500H1z" fill="#fff" /><path d="M9.500 5.500c1 1.500 1 3.500 0 5M12 4c1.800 2.500 1.800 5.500 0 8" fill="none" stroke="#b7e6c0" strokeWidth="1.300" /></svg>
        <time className="ml-[7px]">15:19</time>
      </div>
    </footer>
  );
}

export default function App() {
  return (
    <div className={`flex h-screen flex-col overflow-hidden bg-white ${UI}`}>
      <TitleBar />
      <MenuBar />
      <Toolbar />
      <TabBar />
      <div className="flex min-h-0 flex-1">
        <div className="min-w-0 flex-1 overflow-hidden bg-white pl-[5px]">
          <div className="flex gap-[9px] rounded-b-[22px] border-b-2 border-[#c48a33] bg-[linear-gradient(#e8952a,#eda63f_40%,#f8c468)] pb-[5px] pl-2 pr-[5px]">
            <Game />
            <Chat />
          </div>
          <button className="ml-5 mt-[33px] h-6 w-[69px] rounded-[5px] bg-[#e9a53c] pb-1 font-['Lato',sans-serif] text-[12px] font-black leading-4 text-white">VOLTAR</button>
        </div>
        <Scrollbar />
      </div>
      <StatusBar />
      <TaskBar />
    </div>
  );
}
